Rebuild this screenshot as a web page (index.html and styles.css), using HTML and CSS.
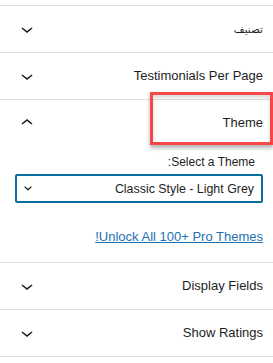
FILE: index.html
```html
<!DOCTYPE html>
<html lang="ar" dir="rtl">
<head>
<meta charset="utf-8">
<link rel="stylesheet" href="styles.css">
</head>
<body>
<div class="panel">
  <div class="section">
    <div class="head">
      <span class="title arabic">تصنيف</span>
      <svg class="chev" viewBox="0 0 24 24" width="24" height="24"><path d="M17.5 11.6L12 16l-5.5-4.4.9-1.2L12 14l4.6-3.6 1 1.2z"/></svg>
    </div>
  </div>
  <div class="section">
    <div class="head">
      <span class="title">Testimonials Per Page</span>
      <svg class="chev" viewBox="0 0 24 24" width="24" height="24"><path d="M17.5 11.6L12 16l-5.5-4.4.9-1.2L12 14l4.6-3.6 1 1.2z"/></svg>
    </div>
  </div>
  <div class="section">
    <div class="head">
      <span class="title">Theme</span>
      <svg class="chev" viewBox="0 0 24 24" width="24" height="24"><path d="M6.5 12.4L12 8l5.5 4.4-.9 1.2L12 10l-4.6 3.6-1-1.2z"/></svg>
    </div>
    <div class="body">
      <div class="label">Select a Theme:</div>
      <div class="select">
        <span class="select-text">Classic Style - Light Grey</span>
        <svg class="select-chev" viewBox="0 0 8 5" width="8" height="5"><path d="M0.6 0.6L4 3.8 7.4 0.6" fill="none" stroke="#1e1e1e" stroke-width="1.3"/></svg>
      </div>
      <a class="link" href="#">Unlock All 100+ Pro Themes!</a>
    </div>
  </div>
  <div class="section">
    <div class="head">
      <span class="title">Display Fields</span>
      <svg class="chev" viewBox="0 0 24 24" width="24" height="24"><path d="M17.5 11.6L12 16l-5.5-4.4.9-1.2L12 14l4.6-3.6 1 1.2z"/></svg>
    </div>
  </div>
  <div class="section last">
    <div class="head">
      <span class="title">Show Ratings</span>
      <svg class="chev" viewBox="0 0 24 24" width="24" height="24"><path d="M17.5 11.6L12 16l-5.5-4.4.9-1.2L12 14l4.6-3.6 1 1.2z"/></svg>
    </div>
  </div>
  <div class="highlight"></div>
</div>
</body>
</html>
```
FILE: styles.css
```css
html, body {
  margin: 0;
  padding: 0;
  background: #fff;
}
body {
  font-family: "Liberation Sans", "DejaVu Sans", Arial, sans-serif;
  color: #1e1e1e;
  width: 273px;
  overflow: hidden;
}
.panel {
  position: relative;
  padding-top: 5px;
}
.section {
  border-top: 1px solid #e0e0e0;
}
.section.last {
  border-bottom: 1px solid #e0e0e0;
}
.head {
  display: flex;
  align-items: center;
  justify-content: space-between;
  height: 46px;
  padding: 0 10px 0 15px;
}
.title {
  font-size: 13px;
  line-height: 18px;
}
.title.arabic {
  font-size: 10.5px;
  font-family: "DejaVu Sans", sans-serif;
}
.chev {
  display: block;
  fill: #1e1e1e;
  flex: none;
}
.body {
  padding: 8px 10px 16px 15px;
}
.label {
  font-size: 12px;
  line-height: 16px;
  padding-right: 8px;
}
.select {
  margin-top: 4px;
  height: 29px;
  box-sizing: border-box;
  border: 2px solid #0a6ea5;
  border-radius: 2px;
  display: flex;
  align-items: center;
  justify-content: space-between;
  padding: 0 7px;
}
.select-text {
  font-size: 12.4px;
  line-height: 16px;
}
.select-chev {
  display: block;
  flex: none;
}
.link {
  display: block;
  margin-top: 25px;
  font-size: 13px;
  line-height: 18px;
  color: #2271b1;
  text-decoration: underline;
}
.highlight {
  position: absolute;
  left: 150px;
  top: 92px;
  width: 123px;
  height: 53px;
  box-sizing: border-box;
  border: 3px solid #f64848;
  box-shadow: 0 3px 4px rgba(0, 0, 0, 0.3), inset 0 3px 4px rgba(0, 0, 0, 0.15);
}
```
